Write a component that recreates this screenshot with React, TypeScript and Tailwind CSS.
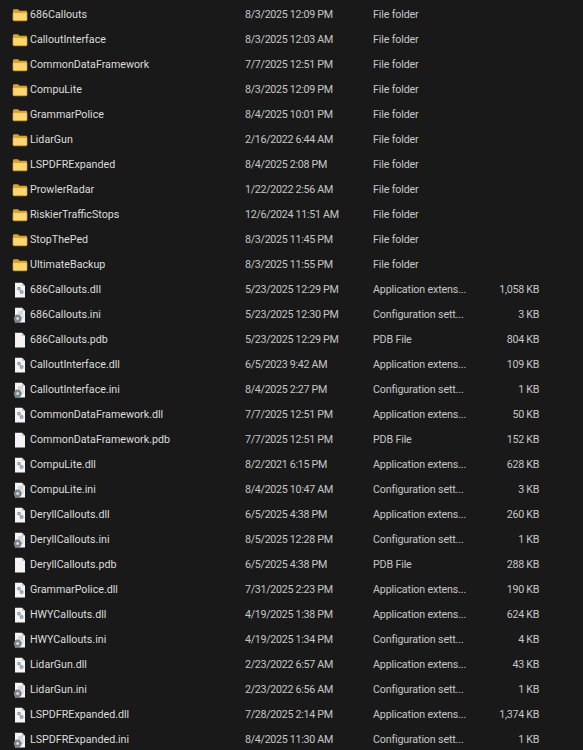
const rows: [string, string, string, string, string][] = [
  ["f", "686Callouts", "8/3/2025 12:09 PM", "File folder", ""],
  ["f", "CalloutInterface", "8/3/2025 12:03 AM", "File folder", ""],
  ["f", "CommonDataFramework", "7/7/2025 12:51 PM", "File folder", ""],
  ["f", "CompuLite", "8/3/2025 12:09 PM", "File folder", ""],
  ["f", "GrammarPolice", "8/4/2025 10:01 PM", "File folder", ""],
  ["f", "LidarGun", "2/16/2022 6:44 AM", "File folder", ""],
  ["f", "LSPDFRExpanded", "8/4/2025 2:08 PM", "File folder", ""],
  ["f", "ProwlerRadar", "1/22/2022 2:56 AM", "File folder", ""],
  ["f", "RiskierTrafficStops", "12/6/2024 11:51 AM", "File folder", ""],
  ["f", "StopThePed", "8/3/2025 11:45 PM", "File folder", ""],
  ["f", "UltimateBackup", "8/3/2025 11:55 PM", "File folder", ""],
  ["d", "686Callouts.dll", "5/23/2025 12:29 PM", "Application extens...", "1,058 KB"],
  ["i", "686Callouts.ini", "5/23/2025 12:30 PM", "Configuration sett...", "3 KB"],
  ["p", "686Callouts.pdb", "5/23/2025 12:29 PM", "PDB File", "804 KB"],
  ["d", "CalloutInterface.dll", "6/5/2023 9:42 AM", "Application extens...", "109 KB"],
  ["i", "CalloutInterface.ini", "8/4/2025 2:27 PM", "Configuration sett...", "1 KB"],
  ["d", "CommonDataFramework.dll", "7/7/2025 12:51 PM", "Application extens...", "50 KB"],
  ["p", "CommonDataFramework.pdb", "7/7/2025 12:51 PM", "PDB File", "152 KB"],
  ["d", "CompuLite.dll", "8/2/2021 6:15 PM", "Application extens...", "628 KB"],
  ["i", "CompuLite.ini", "8/4/2025 10:47 AM", "Configuration sett...", "3 KB"],
  ["d", "DeryllCallouts.dll", "6/5/2025 4:38 PM", "Application extens...", "260 KB"],
  ["i", "DeryllCallouts.ini", "8/5/2025 12:28 PM", "Configuration sett...", "1 KB"],
  ["p", "DeryllCallouts.pdb", "6/5/2025 4:38 PM", "PDB File", "288 KB"],
  ["d", "GrammarPolice.dll", "7/31/2025 2:23 PM", "Application extens...", "190 KB"],
  ["d", "HWYCallouts.dll", "4/19/2025 1:38 PM", "Application extens...", "624 KB"],
  ["i", "HWYCallouts.ini", "4/19/2025 1:34 PM", "Configuration sett...", "4 KB"],
  ["d", "LidarGun.dll", "2/23/2022 6:57 AM", "Application extens...", "43 KB"],
  ["i", "LidarGun.ini", "2/23/2022 6:56 AM", "Configuration sett...", "1 KB"],
  ["d", "LSPDFRExpanded.dll", "7/28/2025 2:14 PM", "Application extens...", "1,374 KB"],
  ["i", "LSPDFRExpanded.ini", "8/4/2025 11:30 AM", "Configuration sett...", "1 KB"],
];

function Icon({ kind }: { kind: string }) {
  if (kind === "f") {
    return (
      <svg width="16" height="16" viewBox="0 0 16 16">
        <path d="M1 3.5C1 2.7 1.5 2.2 2.3 2.2H6l1.6 1.6H14c.6 0 1 .4 1 1v1H1z" fill="#d9a227" />
        <path d="M1 5.6h14v7.2c0 .6-.4 1-1 1H2c-.6 0-1-.4-1-1z" fill="#fcd673" stroke="#dca52f" strokeWidth="0.7" />
      </svg>
    );
  }
  return (
    <svg width="16" height="16" viewBox="0 0 16 16">
      <path d="M3 .8h7l3 3V15.4H3z" fill="#f4f4f4" />
      <path d="M10 .8v3h3z" fill="#bdbdbd" />
      {kind === "d" && (
        <g fill="#8c97a3">
          <circle cx="7" cy="6.6" r="1.9" />
          <circle cx="9.6" cy="10" r="1.9" />
          <circle cx="7" cy="6.6" r="0.6" fill="#f4f4f4" />
          <circle cx="9.6" cy="10" r="0.6" fill="#f4f4f4" />
        </g>
      )}
      {kind === "i" && (
        <g>
          <circle cx="5.6" cy="11.5" r="3.8" fill="#7d8894" stroke="#191919" strokeWidth="0.4" strokeDasharray="1 1" />
          <circle cx="5.6" cy="11.5" r="1.3" fill="#e6e6e6" />
          <path d="M6 5h5M6 7h5M10 9h1.5M10.5 11h1" stroke="#a8a8a8" strokeWidth="0.8" />
        </g>
      )}
    </svg>
  );
}

export default function App() {
  return (
    <div className="w-[583px] h-[750px] overflow-hidden bg-[#191919] pt-[2px] text-[10.7px] leading-[25px] font-['Roboto','Noto_Sans',sans-serif] text-[#c6c6c6]">
      {rows.map(([kind, name, date, type, size]) => (
        <div key={name} className="flex h-[25px] items-center whitespace-nowrap">
          <div className="flex w-[245px] items-center pl-[12px]">
            <Icon kind={kind} />
            <span className="ml-[2px] text-[#dcdcdc]">{name}</span>
          </div>
          <span className="w-[128px] tracking-[-0.3px]">{date}</span>
          <span className="w-[110px] tracking-[-0.15px]">{type}</span>
          <span className="w-[56px] text-right tracking-[-0.3px]">{size}</span>
        </div>
      ))}
    </div>
  );
}
